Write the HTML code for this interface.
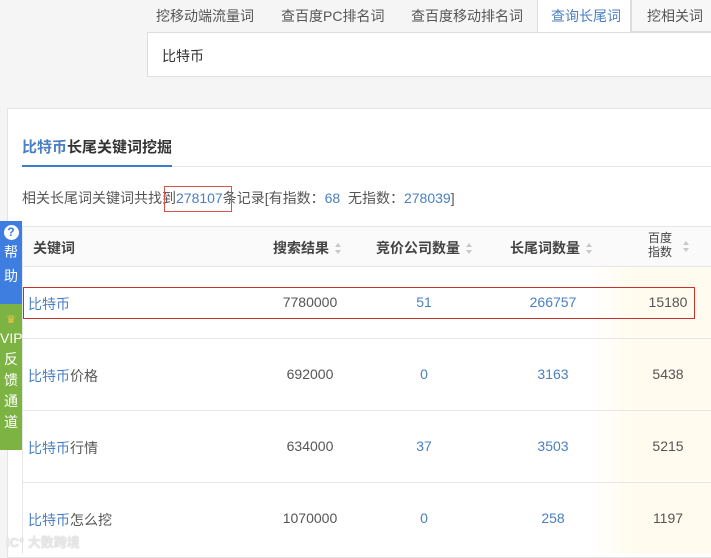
<!DOCTYPE html>
<html><head><meta charset="utf-8"><style>
*{margin:0;padding:0;box-sizing:border-box}
body{width:711px;height:554px;overflow:hidden;background:#f5f5f5;font-family:"Liberation Sans","Noto Sans CJK SC",sans-serif;font-size:14px;color:#333;position:relative}
.a{position:absolute}
.tab{position:absolute;top:0;height:32px;line-height:32px;font-size:14px;color:#555;white-space:nowrap}
.blue{color:#4a7fc1}
.card{position:absolute;left:7px;top:108px;width:710px;height:450px;background:#fff;border:1px solid #e4e4e4}
.row{position:absolute;left:22px;width:700px;border-top:1px solid #e6e6e6}
.c{position:absolute;text-align:center;font-size:14px}
.arr{display:inline-block;width:7px;height:12px;vertical-align:middle;margin-left:6px;position:relative}
.arr:before{content:"";position:absolute;left:0;top:0;border:3.5px solid transparent;border-bottom:4px solid #c8c8c8;border-top:0}
.arr:after{content:"";position:absolute;left:0;top:7px;border:3.5px solid transparent;border-top:4px solid #c8c8c8;border-bottom:0}
</style></head><body>
<div class="tab" style="left:156px">挖移动端流量词</div>
<div class="tab" style="left:281px">查百度PC排名词</div>
<div class="tab" style="left:411px">查百度移动排名词</div>
<div class="a" style="left:537px;top:-1px;width:94px;height:34px;background:#fff;border:1px solid #ddd;border-bottom:none"></div>
<div class="tab blue" style="left:551px">查询长尾词</div>
<div class="a" style="left:631px;top:-1px;width:90px;height:33px;background:#f7f7f7;border:1px solid #ddd"></div>
<div class="tab" style="left:647px">挖相关词</div>
<div class="a" style="left:147px;top:32px;width:570px;height:45px;background:#fff;border:1px solid #ddd"></div>
<div class="a" style="left:162px;top:46px;font-size:14px;color:#333">比特币</div>

<div class="card"></div>
<div class="a" style="left:22px;top:136px;font-size:15px;font-weight:bold;color:#333"><span class="blue">比特币</span>长尾关键词挖掘</div>
<div class="a" style="left:22px;top:166px;width:700px;height:1px;background:#e6e6e6"></div>
<div class="a" style="left:22px;top:165px;width:150px;height:2px;background:#3b7fd0"></div>
<div class="a" style="left:22px;top:188px;font-size:14px;color:#555;white-space:nowrap">相关长尾词关键词共找到<span class="blue">278107</span>条记录[有指数：<span class="blue">68</span>&nbsp; 无指数：<span class="blue">278039</span>]</div>
<div class="a" style="left:164px;top:186px;width:68px;height:26px;border:1px solid #d9534f"></div>

<div class="a" style="left:22px;top:226px;width:700px;height:40px;background:#fafafa;border-top:1px solid #e6e6e6"></div>
<div class="a" style="left:590px;top:267px;width:121px;height:287px;background:linear-gradient(90deg,rgba(255,253,240,0),#fffcef 35%,#fffcef)"></div>
<div class="a" style="left:22px;top:226px;width:1px;height:328px;background:#e6e6e6"></div>
<div class="a" style="left:33px;top:238px;font-weight:bold;color:#444">关键词</div>
<div class="a" style="left:273px;top:238px;font-weight:bold;color:#444">搜索结果<span class="arr"></span></div>
<div class="a" style="left:376px;top:238px;font-weight:bold;color:#444">竞价公司数量<span class="arr"></span></div>
<div class="a" style="left:510px;top:238px;font-weight:bold;color:#444">长尾词数量<span class="arr"></span></div>
<div class="a" style="left:648px;top:231px;font-size:12px;line-height:14px;color:#444">百度<br>指数</div>
<div class="a" style="left:677px;top:238px"><span class="arr"></span></div>

<div class="row" style="top:266px"></div>
<div class="row" style="top:338px"></div>
<div class="row" style="top:410px"></div>
<div class="row" style="top:482px"></div>

<div class="a" style="left:23px;top:287px;width:672px;height:32px;border:1px solid #c9302c"></div>

<div class="a blue" style="left:28px;top:294px">比特币</div>
<div class="c" style="left:260px;width:100px;top:294px;color:#555">7780000</div>
<div class="c blue" style="left:374px;width:100px;top:294px">51</div>
<div class="c blue" style="left:503px;width:100px;top:294px">266757</div>
<div class="c" style="left:618px;width:100px;top:294px;color:#555">15180</div>

<div class="a" style="left:28px;top:366px"><span class="blue">比特币</span><span style="color:#555">价格</span></div>
<div class="c" style="left:260px;width:100px;top:366px;color:#555">692000</div>
<div class="c blue" style="left:374px;width:100px;top:366px">0</div>
<div class="c blue" style="left:503px;width:100px;top:366px">3163</div>
<div class="c" style="left:618px;width:100px;top:366px;color:#555">5438</div>

<div class="a" style="left:28px;top:438px"><span class="blue">比特币</span><span style="color:#555">行情</span></div>
<div class="c" style="left:260px;width:100px;top:438px;color:#555">634000</div>
<div class="c blue" style="left:374px;width:100px;top:438px">37</div>
<div class="c blue" style="left:503px;width:100px;top:438px">3503</div>
<div class="c" style="left:618px;width:100px;top:438px;color:#555">5215</div>

<div class="a" style="left:28px;top:510px"><span class="blue">比特币</span><span style="color:#555">怎么挖</span></div>
<div class="c" style="left:260px;width:100px;top:510px;color:#555">1070000</div>
<div class="c blue" style="left:374px;width:100px;top:510px">0</div>
<div class="c blue" style="left:503px;width:100px;top:510px">258</div>
<div class="c" style="left:618px;width:100px;top:510px;color:#555">1197</div>

<div class="a" style="left:6px;top:532px;font-size:13px;color:#e8e8e8;font-weight:bold;text-shadow:0 0 1px #bbb">IC° 大数跨境</div>

<div class="a" style="left:0;top:221px;width:22px;height:83px;background:#3d7ee0;color:#fff;text-align:center;font-size:14px;line-height:24px">
<div style="width:15px;height:15px;border-radius:50%;background:#fff;color:#3d7ee0;font-size:12px;line-height:15px;font-weight:bold;margin:4px auto 0">?</div>帮<br>助</div>
<div class="a" style="left:0;top:304px;width:22px;height:146px;background:#7cb342;color:#fff;text-align:center;font-size:14px;line-height:21px;padding-top:8px">
<div style="color:#f5c542;font-size:11px;line-height:16px">♛</div>VIP<br>反<br>馈<br>通<br>道</div>
</body></html>
